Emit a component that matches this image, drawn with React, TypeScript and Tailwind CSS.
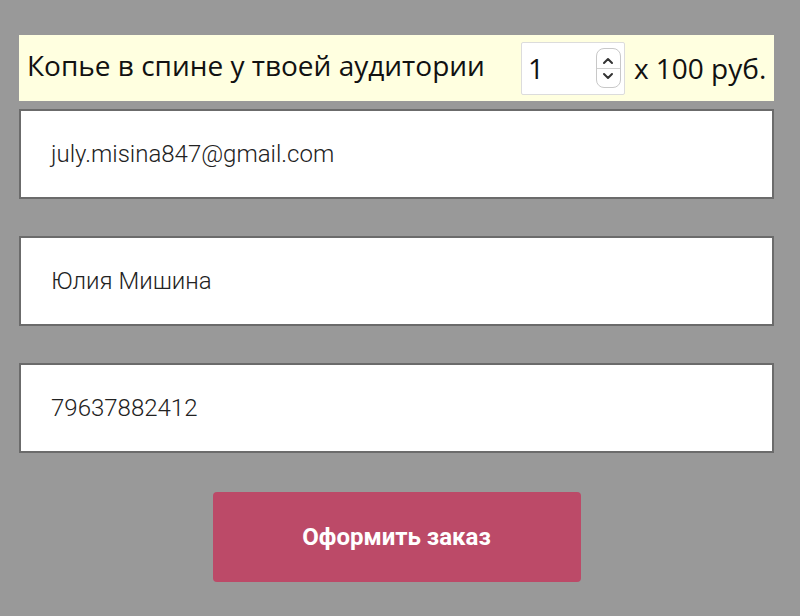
import React from "react";

export default function App() {
  return (
    <div className="w-[800px] h-[616px] bg-[#999999] overflow-hidden">
      <div className="ml-[19px] w-[755px] pt-[35px] flex flex-col">
        <div
          className="h-[66px] bg-[#ffffe0] flex items-center pl-[8px] pr-[8px] text-[28px] text-[#111111] whitespace-nowrap"
          style={{ fontFamily: '"Open Sans", "Noto Sans", sans-serif' }}
        >
          <span className="mt-[-6px] shrink-0">Копье в спине у твоей аудитории</span>
          <div className="ml-[36px] shrink-0 w-[104px] h-[53px] bg-white border border-[#dcdcdc] rounded-[2px] flex items-center pl-[6px] pr-[3px]">
            <span className="flex-1 leading-none">1</span>
            <div className="w-[25px] h-[40px] border border-[#c8c8c8] rounded-[8px] flex flex-col items-center justify-center bg-white">
              <svg width="14" height="10" viewBox="0 0 14 10">
                <path d="M3 7 L7 3 L11 7" fill="none" stroke="#333" strokeWidth="2" strokeLinecap="round" strokeLinejoin="round" />
              </svg>
              <div className="w-full h-px bg-[#d0d0d0] my-[2px]" />
              <svg width="14" height="10" viewBox="0 0 14 10">
                <path d="M3 3 L7 7 L11 3" fill="none" stroke="#333" strokeWidth="2" strokeLinecap="round" strokeLinejoin="round" />
              </svg>
            </div>
          </div>
          <span className="ml-[9px] shrink-0">x 100 руб.</span>
        </div>
        <div
          className="mt-[8px] flex flex-col gap-[37px] text-[24px] font-light text-[#222222]"
          style={{ fontFamily: 'Roboto, "Noto Sans", sans-serif' }}
        >
          <div className="h-[90px] bg-white border-2 border-[#6b6b6b] flex items-center pl-[30px]">
            july.misina847@gmail.com
          </div>
          <div className="h-[90px] bg-white border-2 border-[#6b6b6b] flex items-center pl-[30px]">
            Юлия Мишина
          </div>
          <div className="h-[90px] bg-white border-2 border-[#6b6b6b] flex items-center pl-[30px]">
            79637882412
          </div>
        </div>
        <div className="mt-[39px] flex justify-center">
          <button
            className="w-[368px] h-[90px] bg-[#bc4a68] rounded-[4px] text-white text-[24px] font-bold"
            style={{ fontFamily: 'Roboto, "Noto Sans", sans-serif' }}
          >
            Оформить заказ
          </button>
        </div>
      </div>
    </div>
  );
}
